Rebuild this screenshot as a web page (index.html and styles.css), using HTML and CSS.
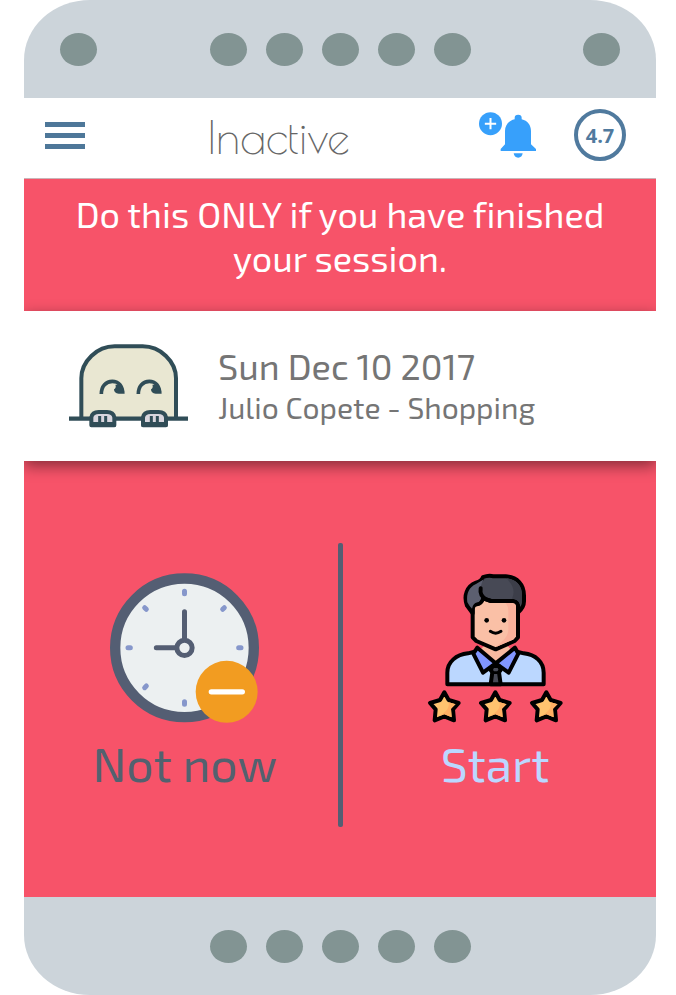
FILE: index.html
```html
<!DOCTYPE html>
<html lang="en">
<head>
<meta charset="utf-8">
<meta name="viewport" content="width=device-width, initial-scale=1">
<title>Inactive</title>
<link rel="stylesheet" href="styles.css">
</head>
<body>
<div class="phone">
  <div class="bezel bezel-top">
    <span class="dot"></span>
    <div class="dots">
      <span class="dot"></span><span class="dot"></span><span class="dot"></span><span class="dot"></span><span class="dot"></span>
    </div>
    <span class="dot"></span>
  </div>

  <header class="appbar">
    <button class="icon-button menu" type="button" aria-label="Menu">
      <span class="bar"></span><span class="bar"></span><span class="bar"></span>
    </button>
    <h1 class="title">Inactive</h1>
    <button class="icon-button bell" type="button" aria-label="Add notification">
      <svg viewBox="54 33 177 144" width="59" height="48" aria-hidden="true">
        <circle cx="91.500" cy="71" r="34.500" fill="#37a0fb"/>
        <path d="M91.500 54V88M74.500 71H108.500" stroke="#fff" stroke-width="6" fill="none"/>
        <path d="M164 55V53Q164 44 174.500 44Q185 44 185 53V58C203 62 213 76 213 93V133L228 147V153H122V147L135 133V93C135 76 146 62 164 58Z" fill="#37a0fb"/>
        <path d="M161 160H188C187 168 182 173 174.500 173S162 168 161 160Z" fill="#37a0fb"/>
      </svg>
    </button>
    <span class="score">4.7</span>
  </header>

  <main class="screen">
    <p class="notice">Do this ONLY if you have finished your session.</p>

    <section class="session">
      <svg class="avatar" viewBox="54 39 363 255" width="121" height="85" aria-hidden="true">
        <path d="M94 262V145C94 94 141 49 194 49H278C331 49 378 94 378 145V262" fill="#e9e7d2" stroke="#304d57" stroke-width="12"/>
        <path d="M57 266H414" stroke="#304d57" stroke-width="13"/>
        <g id="eye">
          <path d="M154 192C154 168 168 154 187 154C206 154 217 168 218 188" fill="none" stroke="#304d57" stroke-width="11"/>
          <path d="M196 164H214Q222 174 224 191H206Q192 190 192 178Q200 172 196 164Z" fill="#304d57"/>
        </g>
        <use href="#eye" x="111"/>
        <g id="hand">
          <path d="M124 286V262Q127 246 146 246H171Q190 246 193 262V286Z" fill="#d9d6de" stroke="#304d57" stroke-width="12" stroke-linejoin="round"/>
          <path d="M149 258V280M167 258V280" stroke="#304d57" stroke-width="9"/>
          <path d="M120 283H197" stroke="#304d57" stroke-width="14"/>
        </g>
        <use href="#hand" x="155"/>
      </svg>
      <div class="details">
        <h2 class="date">Sun Dec 10 2017</h2>
        <p class="who">Julio Copete - Shopping</p>
      </div>
    </section>

    <section class="actions">
      <button class="action later" type="button">
        <svg viewBox="63 36 450 450" width="150" height="150" aria-hidden="true">
          <circle cx="286.500" cy="260.500" r="208" fill="#ecf0f1" stroke="#545e73" stroke-width="31"/>
          <g stroke="#8697cb" stroke-width="15" stroke-linecap="round">
            <path d="M286.500 91V98M286.500 422V430M117 260.500H124M449 260.500H456M167 140L172 145M406 140L401 145M167 380L172 375"/>
          </g>
          <path d="M286.500 152V232M202 260.500H258" stroke="#545e73" stroke-width="15" stroke-linecap="round"/>
          <circle cx="286.500" cy="260.500" r="23" fill="#ecf0f1" stroke="#545e73" stroke-width="15"/>
          <circle cx="413" cy="392.500" r="93" fill="#f29c21"/>
          <path d="M367 392.500H460" stroke="#fff" stroke-width="16" stroke-linecap="round"/>
        </svg>
        <span class="label">Not now</span>
      </button>
      <div class="divider"></div>
      <button class="action start" type="button">
        <svg viewBox="51 36 411 450" width="137" height="150" aria-hidden="true">
          <g stroke="#000" stroke-width="12" stroke-linejoin="round" stroke-linecap="round">
            <path d="M222 249V268L257 305L292 268V249Z" fill="#f9b99f" stroke="none"/>
            <path d="M112 370V335C112 302 139 281 174 277L202 270L257 307L313 270L341 277C376 281 401 302 401 335V370Z" fill="#bbd7ff"/>
            <path d="M222 255L209 268L257 302L305 268L291 253L257 264Z" fill="#f9b99f" stroke="none"/>
            <path d="M202 260L190 278L219 335L257 307Z" fill="#8196ff"/>
            <path d="M315 260L325 278L296 335L257 307Z" fill="#8196ff"/>
            <path d="M248 315H267L272 327L267 334L272 370H242L247 334L242 327Z" fill="#474955"/>
            <path d="M246 335H268" stroke-width="8"/>
            <path d="M188 128V229L199 240L257 265L314 240L324 229V125L314 112H215Z" fill="#fac0a6"/>
            <path d="M286 124H311Q318 126 318 137V226L309 236L258 258C281 238 295 226 295 205V151Q295 136 286 124Z" fill="#f9b19b" stroke="none"/>
            <path d="M188 157L171 134C160 105 170 76 198 65Q216 60 219 48Q237 41 251 46H287C322 48 342 70 342 104V121C342 136 335 145 325 154V140Q325 122 310 120H243L220 112Q213 130 201 130Q190 130 188 143Z" fill="#474955"/>
            <path d="M198 69C177 79 169 96 172 124L186 143Q190 126 201 124Q211 123 215 104L211 82Q213 66 222 55Z" fill="#5c5f70" stroke="none"/>
            <path d="M212 82Q208 105 230 116L243 120" fill="none"/>
            <path d="M289 52C318 54 336 74 336 103V122L330 130Q323 112 306 113Q321 82 289 52Z" fill="#3c3e49" stroke="none"/>
            <path d="M241 211Q257 222 273 211" fill="none" stroke-width="9"/>
          </g>
          <circle cx="230" cy="178" r="7"/><circle cx="282" cy="178" r="7"/>
          <g id="star" stroke-linejoin="round">
            <path d="M103 394L116 417L146 426L129 445L132 478L103 466L74 478L77 445L60 426L90 417Z" fill="#ffc36f" stroke="#000" stroke-width="12"/>
            <path d="M116 424L137 430L123 443L125 469L103 460L80 468C100 460 120 446 116 424Z" fill="#ffb064"/>
          </g>
          <use href="#star" x="153"/>
          <use href="#star" x="306"/>
        </svg>
        <span class="label">Start</span>
      </button>
    </section>
  </main>

  <div class="bezel bezel-bottom">
    <div class="dots">
      <span class="dot"></span><span class="dot"></span><span class="dot"></span><span class="dot"></span><span class="dot"></span>
    </div>
  </div>
</div>
</body>
</html>
```
FILE: styles.css
```css
* {
  box-sizing: border-box;
}

body {
  margin: 0;
  background: #fff;
  font-family: "Exo 2", Roboto, "Liberation Sans", sans-serif;
  font-variant-ligatures: none;
}

h1, h2, p {
  margin: 0;
  font-weight: 400;
}

button {
  border: 0;
  padding: 0;
  background: none;
  font: inherit;
  cursor: pointer;
}

svg {
  display: block;
}

.phone {
  display: flex;
  flex-direction: column;
  min-height: 100vh;
  margin: 0 20px 0 24px;
}

.bezel {
  display: flex;
  align-items: center;
  justify-content: space-between;
  height: 98px;
  padding: 0 36px;
  background: #ccd4da;
}

.bezel-top {
  border-radius: 66px 66px 0 0 / 60px 60px 0 0;
}

.bezel-bottom {
  justify-content: center;
  border-radius: 0 0 66px 66px / 0 0 60px 60px;
}

.dots {
  display: flex;
  gap: 19px;
}

.dot {
  width: 37px;
  height: 33px;
  border-radius: 50%;
  background: #829493;
}

.appbar {
  display: flex;
  align-items: center;
  height: 81px;
  padding: 0 30px 6px 21px;
  border-bottom: 1px solid #c9b5b8;
}

.menu {
  display: flex;
  flex-direction: column;
  gap: 6px;
  width: 40px;
}

.bar {
  height: 5px;
  background: #4e7799;
}

.title {
  flex: 1;
  padding: 4px 6px 0 0;
  font-family: "Poiret One", Lato, sans-serif;
  font-size: 45px;
  font-weight: 400;
  line-height: 48px;
  text-align: center;
  color: #666;
}

.score {
  display: grid;
  place-items: center;
  width: 52px;
  height: 52px;
  margin-left: 37px;
  border: 4px solid #507a9e;
  border-radius: 50%;
  font-family: "Open Sans", sans-serif;
  font-size: 20px;
  font-weight: 700;
  color: #507a9e;
}

.screen {
  display: flex;
  flex: 1;
  flex-direction: column;
  background: #f75369;
}

.notice {
  padding: 13px 40px 31px;
  font-size: 36px;
  line-height: 44px;
  text-align: center;
  color: #fff;
}

.session {
  display: flex;
  align-items: center;
  gap: 29px;
  height: 150px;
  padding: 0 44px 2px;
  background: #fff;
  box-shadow: 0 5px 14px rgba(0, 0, 0, 0.45);
  clip-path: inset(-12px 0 -24px 0);
  color: #757575;
}

.date {
  font-size: 36px;
  line-height: 44px;
}

.who {
  font-size: 30px;
  line-height: 38px;
}

.actions {
  display: grid;
  flex: 1;
  grid-template-columns: 1fr 5px 1fr;
  align-content: center;
  padding: 12px 8px 0;
}

.divider {
  height: 284px;
  border-radius: 2px;
  background: #545e73;
}

.action {
  display: flex;
  flex-direction: column;
  align-items: center;
  justify-content: center;
  gap: 10px;
  padding-bottom: 4px;
}

.label {
  font-size: 48px;
  line-height: 60px;
}

.later {
  color: #53616f;
}

.start {
  color: #bbd7ff;
}
```
